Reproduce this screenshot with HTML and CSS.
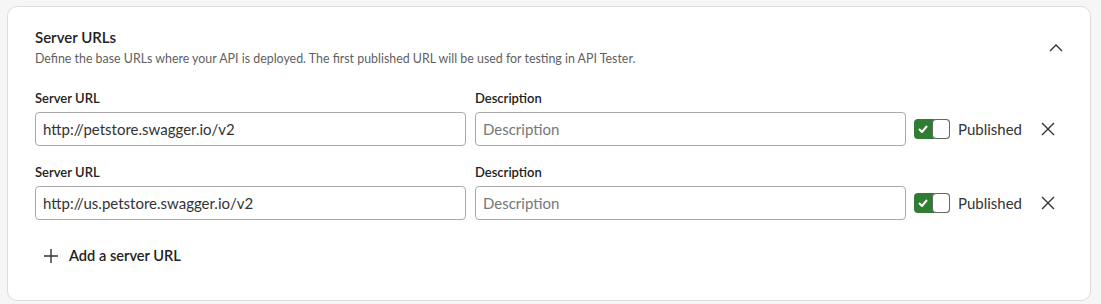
FILE: index.html
```html
<!DOCTYPE html>
<html lang="en">
<head>
    <meta charset="UTF-8">
    <title>Server URLs</title>
    <link rel="stylesheet" href="styles.css">
</head>
<body>
    <section class="card">
        <div class="card-head">
            <div>
                <h2 class="card-title">Server URLs</h2>
                <p class="card-desc">Define the base URLs where your API is deployed. The first published URL will be used for testing in API Tester.</p>
            </div>
            <button class="icon-btn chevron" aria-label="Collapse">
                <svg width="16" height="16" viewBox="0 0 16 16"><path d="M2 11 L8 5 L14 11" fill="none" stroke="#333" stroke-width="1.4"/></svg>
            </button>
        </div>

        <div class="server-row">
            <div class="field">
                <label class="field-label">Server URL</label>
                <input class="field-input" type="text" value="http://petstore.swagger.io/v2">
            </div>
            <div class="field">
                <label class="field-label">Description</label>
                <input class="field-input" type="text" placeholder="Description">
            </div>
            <div class="row-actions">
                <span class="toggle">
                    <span class="toggle-on">
                        <svg width="10" height="8" viewBox="0 0 10 8"><path d="M1 4 L4 7 L9 1" fill="none" stroke="#fff" stroke-width="2"/></svg>
                    </span>
                    <span class="toggle-knob"></span>
                </span>
                <span class="toggle-label">Published</span>
                <button class="icon-btn" aria-label="Remove">
                    <svg width="14" height="14" viewBox="0 0 14 14"><path d="M1 1 L13 13 M13 1 L1 13" stroke="#333" stroke-width="1.4"/></svg>
                </button>
            </div>
        </div>

        <div class="server-row">
            <div class="field">
                <label class="field-label">Server URL</label>
                <input class="field-input" type="text" value="http://us.petstore.swagger.io/v2">
            </div>
            <div class="field">
                <label class="field-label">Description</label>
                <input class="field-input" type="text" placeholder="Description">
            </div>
            <div class="row-actions">
                <span class="toggle">
                    <span class="toggle-on">
                        <svg width="10" height="8" viewBox="0 0 10 8"><path d="M1 4 L4 7 L9 1" fill="none" stroke="#fff" stroke-width="2"/></svg>
                    </span>
                    <span class="toggle-knob"></span>
                </span>
                <span class="toggle-label">Published</span>
                <button class="icon-btn" aria-label="Remove">
                    <svg width="14" height="14" viewBox="0 0 14 14"><path d="M1 1 L13 13 M13 1 L1 13" stroke="#333" stroke-width="1.4"/></svg>
                </button>
            </div>
        </div>

        <button class="add-btn">
            <svg width="16" height="16" viewBox="0 0 16 16"><path d="M8 1 V15 M1 8 H15" stroke="#333" stroke-width="1.4"/></svg>
            Add a server URL
        </button>
    </section>
</body>
</html>
```

FILE: styles.css
```css
* {
    box-sizing: border-box;
}

body {
    margin: 0;
    padding: 6px 10px 3px 7px;
    background-color: #f6f6f6;
    font-family: Lato, "Open Sans", sans-serif;
    color: #222;
}

.card {
    background-color: #fff;
    border: 1px solid #dcdcdc;
    border-radius: 10px;
    padding: 20px 30px 34px 27px;
}

.card-head {
    display: flex;
    justify-content: space-between;
    align-items: center;
}

.card-title {
    margin: 0;
    font-size: 15px;
    line-height: 20px;
    font-weight: 600;
    color: #222;
}

.card-desc {
    margin: 3px 0 0 0;
    font-size: 12.4px;
    line-height: 18px;
    color: #5f5f5f;
}

.icon-btn {
    background: none;
    border: none;
    padding: 0;
    width: 24px;
    height: 24px;
    display: flex;
    justify-content: center;
    align-items: center;
    cursor: pointer;
}

.chevron {
    margin-right: -8px;
}

.server-row {
    display: flex;
    align-items: flex-end;
    gap: 9px;
    margin-top: 21px;
}

.server-row + .server-row {
    margin-top: 17px;
}

.field {
    flex: 1;
    display: flex;
    flex-direction: column;
    gap: 5px;
}

.field-label {
    font-size: 13px;
    line-height: 18px;
    font-weight: 600;
    color: #222;
}

.field-input {
    height: 34px;
    border: 1px solid #aaa;
    border-radius: 4px;
    padding: 0 7px;
    font-family: inherit;
    font-size: 15px;
    color: #333;
}

.field-input::placeholder {
    color: #777;
}

.row-actions {
    display: flex;
    align-items: center;
    height: 34px;
    margin-left: -1px;
}

.toggle {
    display: flex;
    width: 36px;
    height: 20px;
    border-radius: 4px;
    background-color: #2e7d32;
    overflow: hidden;
}

.toggle-on {
    width: 18px;
    display: flex;
    justify-content: center;
    align-items: center;
}

.toggle-knob {
    width: 18px;
    background-color: #fff;
    border: 1px solid #666;
    border-radius: 4px;
}

.toggle-label {
    margin-left: 8px;
    font-size: 15px;
    color: #333;
}

.row-actions .icon-btn {
    margin-left: 14px;
}

.add-btn {
    display: flex;
    align-items: center;
    gap: 10px;
    margin-top: 26px;
    margin-left: 8px;
    padding: 0;
    background: none;
    border: none;
    font-family: inherit;
    font-size: 14.6px;
    line-height: 20px;
    font-weight: 600;
    color: #222;
    cursor: pointer;
}
```
